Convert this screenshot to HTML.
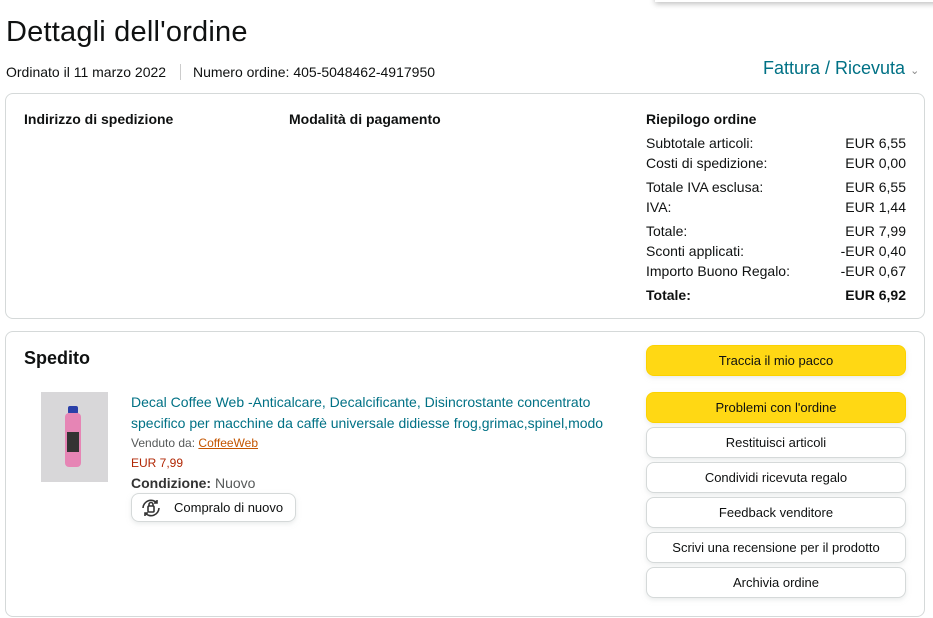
<!DOCTYPE html><html><head><style>
body{margin:0;width:933px;height:618px;overflow:hidden;background:#fff;font-family:"Liberation Sans",Arial,sans-serif;color:#0f1111;font-size:14px;position:relative}
.a{position:absolute;white-space:nowrap}
.box{position:absolute;border:1px solid #d5d9d9;border-radius:8px;box-sizing:border-box}
.b{font-weight:bold}
.btn{position:absolute;left:646px;width:260px;height:31px;border:1px solid #d5d9d9;border-radius:8px;box-sizing:border-box;text-align:center;line-height:29px;font-size:13px;background:#fff;box-shadow:0 2px 5px rgba(213,217,217,.5)}
.y{background:#ffd814;border-color:#fcd200}
.r{position:absolute;left:646px;width:260px;font-size:14px}
.r span{float:right}
</style></head><body>
<div class="a" style="left:655px;top:-10px;width:290px;height:12px;box-shadow:0 2px 6px rgba(0,0,0,.25);background:#fff"></div>
<div class="a" style="left:6px;top:16px;font-size:29px;letter-spacing:0.2px">Dettagli dell'ordine</div>
<div class="a" style="left:6px;top:64px;font-size:14px">Ordinato il 11 marzo 2022 <span style="display:inline-block;width:1px;height:16px;background:#ccc;margin:0 12px -3px 10px"></span>Numero ordine: 405-5048462-4917950</div>
<div class="a" style="left:763px;top:58px;font-size:18px;color:#007185">Fattura / Ricevuta <span style="font-size:11px;color:#888">&#8964;</span></div>
<div class="box" style="left:5px;top:93px;width:920px;height:226px"></div>
<div class="a b" style="left:24px;top:111px">Indirizzo di spedizione</div>
<div class="a b" style="left:289px;top:111px">Modalità di pagamento</div>
<div class="a b" style="left:646px;top:111px">Riepilogo ordine</div>
<div class="r" style="top:135px">Subtotale articoli:<span>EUR 6,55</span></div>
<div class="r" style="top:155px">Costi di spedizione:<span>EUR 0,00</span></div>
<div class="r" style="top:179px">Totale IVA esclusa:<span>EUR 6,55</span></div>
<div class="r" style="top:199px">IVA:<span>EUR 1,44</span></div>
<div class="r" style="top:223px">Totale:<span>EUR 7,99</span></div>
<div class="r" style="top:243px">Sconti applicati:<span>-EUR 0,40</span></div>
<div class="r" style="top:263px">Importo Buono Regalo:<span>-EUR 0,67</span></div>
<div class="r b" style="top:287px">Totale:<span>EUR 6,92</span></div>
<div class="box" style="left:5px;top:331px;width:920px;height:286px"></div>
<div class="a b" style="left:24px;top:348px;font-size:18px">Spedito</div>
<div class="a" style="left:41px;top:392px;width:67px;height:90px;background:#d8d7d9">
<div style="position:absolute;left:27px;top:14px;width:10px;height:8px;background:#2a3fa8;border-radius:2px"></div>
<div style="position:absolute;left:24px;top:21px;width:16px;height:54px;background:#e685b5;border-radius:4px"></div>
<div style="position:absolute;left:26px;top:40px;width:12px;height:20px;background:#333"></div></div>
<div class="a" style="left:131px;top:392px;color:#007185;line-height:21px;font-size:14px">Decal Coffee Web -Anticalcare, Decalcificante, Disincrostante concentrato<br>specifico per macchine da caffè universale didiesse frog,grimac,spinel,modo</div>
<div class="a" style="left:131px;top:436px;font-size:12px;color:#565959">Venduto da: <span style="color:#c45500;text-decoration:underline">CoffeeWeb</span></div>
<div class="a" style="left:131px;top:456px;font-size:12px;color:#b12704">EUR 7,99</div>
<div class="a" style="left:131px;top:475px;color:#565959"><b style="color:#333">Condizione:</b> Nuovo</div>
<div class="a" style="left:131px;top:493px;width:165px;height:29px;border:1px solid #d5d9d9;border-radius:8px;box-sizing:border-box;box-shadow:0 2px 5px rgba(213,217,217,.5)">
<svg style="position:absolute;left:8px;top:4px" width="22" height="20" viewBox="0 0 22 20" fill="none" stroke="#333" stroke-width="1.6"><path d="M3 10a8 8 0 0 1 14-5M19 10a8 8 0 0 1-14 5"/><path d="M17 2v3h-3M5 18v-3h3"/><rect x="8" y="8" width="6" height="6" rx="1"/><path d="M9 8V6.5a2 2 0 0 1 4 0V8"/></svg>
<span style="position:absolute;left:42px;top:6px;font-size:13px">Compralo di nuovo</span></div>
<div class="btn y" style="top:345px">Traccia il mio pacco</div>
<div class="btn y" style="top:392px">Problemi con l'ordine</div>
<div class="btn" style="top:427px">Restituisci articoli</div>
<div class="btn" style="top:462px">Condividi ricevuta regalo</div>
<div class="btn" style="top:497px">Feedback venditore</div>
<div class="btn" style="top:532px">Scrivi una recensione per il prodotto</div>
<div class="btn" style="top:567px">Archivia ordine</div>
</body></html>
